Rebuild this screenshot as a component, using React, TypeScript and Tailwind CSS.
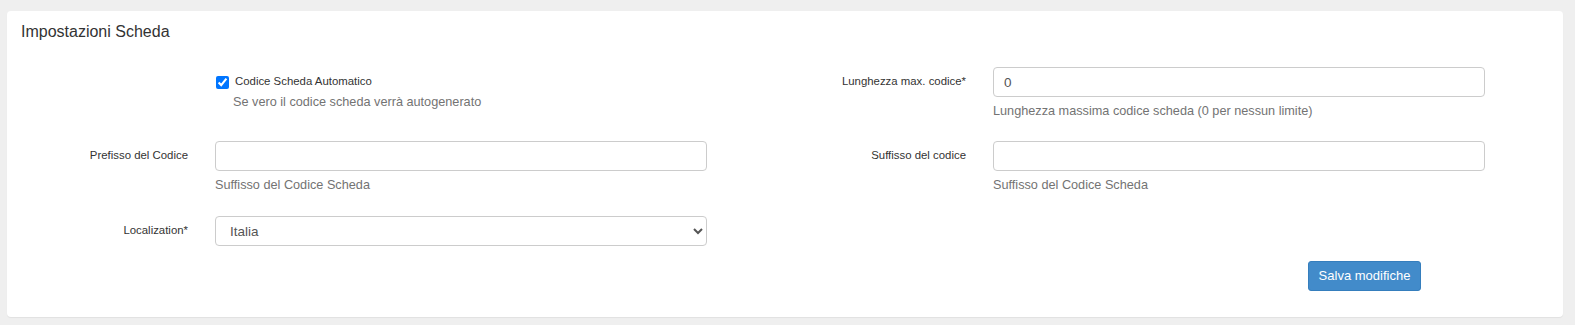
import React from "react";

const font = { fontFamily: '"Liberation Sans", Arial, sans-serif' };

function Label({ children }: { children: React.ReactNode }) {
  return (
    <div className="w-[181px] h-[30px] flex items-center justify-end text-[11.4px] text-[#333] shrink-0">
      {children}
    </div>
  );
}

function Field({
  label,
  help,
  value,
}: {
  label: string;
  help: string;
  value?: string;
}) {
  return (
    <div className="flex">
      <Label>{label}</Label>
      <div className="ml-[27px] w-[492px]">
        <input
          type="text"
          defaultValue={value ?? ""}
          className="block w-full h-[30px] border border-[#ccc] rounded-[4px] px-[10px] text-[13.5px] text-[#555] bg-white outline-none"
        />
        <div className="mt-[4px] text-[12.7px] leading-[20px] text-[#737373]">{help}</div>
      </div>
    </div>
  );
}

export default function App() {
  return (
    <div className="w-[1575px] h-[325px] bg-[#efefef] pt-[11px] pl-[7px] pr-[12px]" style={font}>
      <div className="bg-white rounded-[4px] h-[306px] shadow-[0_1px_1px_rgba(0,0,0,0.06)]">
        <div className="pl-[14px] pt-[11px] text-[16px] leading-[20px] text-[#333]">
          Impostazioni Scheda
        </div>
        <div className="mt-[25px] grid grid-cols-[778px_778px]">
          {/* Row 1 */}
          <div className="flex">
            <div className="w-[181px] shrink-0" />
            <div className="ml-[27px] pt-[5px]">
              <label className="flex items-center h-[20px] text-[11.4px] text-[#333]">
                <input type="checkbox" defaultChecked className="w-[13px] h-[13px] m-0 ml-px accent-[#0075ff]" />
                <span className="ml-[6px]">Codice Scheda Automatico</span>
              </label>
              <div className="pl-[18px] text-[12.7px] leading-[20px] text-[#737373]">
                Se vero il codice scheda verrà autogenerato
              </div>
            </div>
          </div>
          <Field
            label="Lunghezza max. codice*"
            help="Lunghezza massima codice scheda (0 per nessun limite)"
            value="0"
          />
          {/* Row 2 */}
          <div className="mt-[20px]">
            <Field label="Prefisso del Codice" help="Suffisso del Codice Scheda" />
          </div>
          <div className="mt-[20px]">
            <Field label="Suffisso del codice" help="Suffisso del Codice Scheda" />
          </div>
          {/* Row 3 */}
          <div className="mt-[21px] flex">
            <Label>Localization*</Label>
            <div className="ml-[27px] w-[492px]">
              <select
                defaultValue="it"
                className="block w-full h-[30px] border border-[#ccc] rounded-[4px] pl-[10px] pr-[6px] text-[13.5px] text-[#555] bg-white outline-none"
              >
                <option value="it">Italia</option>
              </select>
            </div>
          </div>
          <div />
          {/* Button */}
          <div />
          <div className="mt-[15px] pl-[523px]">
            <button className="w-[113px] h-[30px] bg-[#428bca] border border-[#357ebd] rounded-[3px] text-white text-[13px]">
              Salva modifiche
            </button>
          </div>
        </div>
      </div>
    </div>
  );
}
